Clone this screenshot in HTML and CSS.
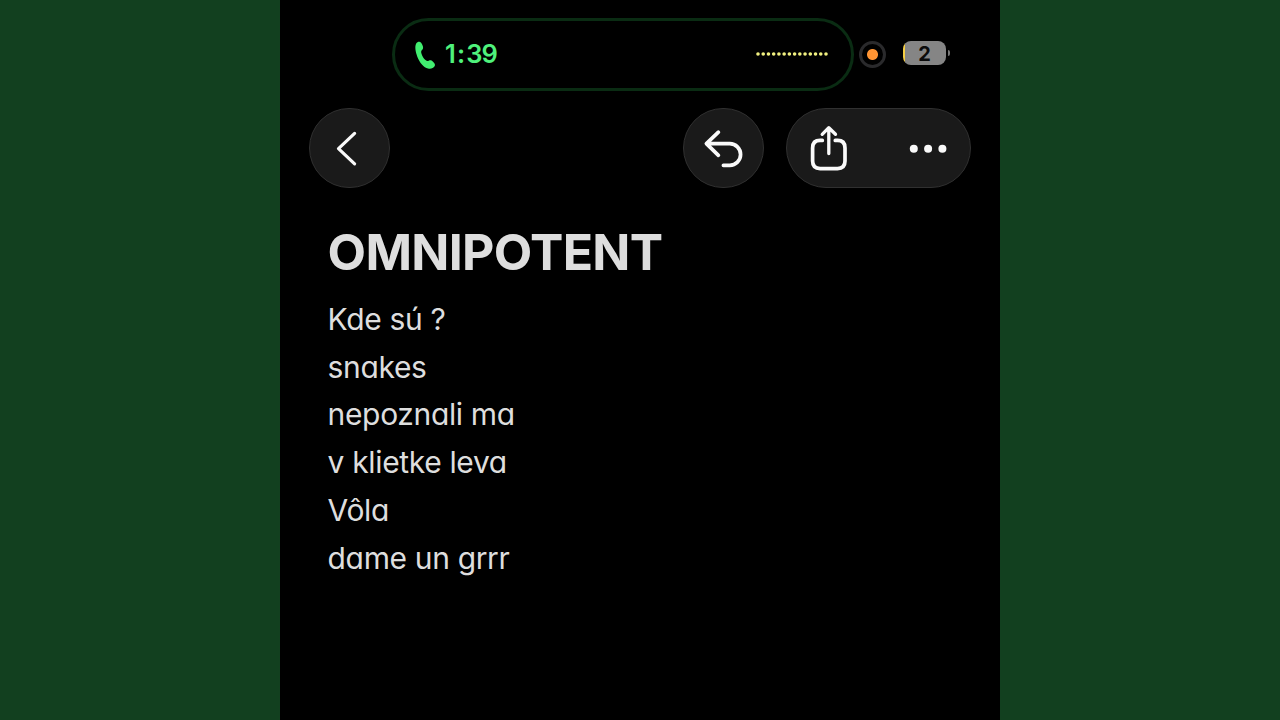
FILE: index.html
```
<!DOCTYPE html>
<html lang="sk">
<head>
  <meta charset="utf-8">
  <title>OMNIPOTENT</title>
  <link rel="stylesheet" href="styles.css">
</head>
<body>
  <div class="phone">

    <!-- Status bar -->
    <div class="status">
      <div class="island">
        <svg class="call-icon" width="22" height="30" viewBox="0 0 22 30">
          <path d="M2.2 3.6C3 2.2 4.6 1.5 6 1.9C7.4 2.3 8 4 8.7 5.7C9.4 7.6 9.2 8.9 8 10.1C6.9 11.2 7 12.2 7.6 13.9C8.3 16.2 9.9 18.8 11.5 20.1C12.8 21.2 13.6 21.2 14.7 20.7C16.2 20 17.4 20.2 19 21.7C20.8 23.4 21.5 24.8 20.6 26.3C19.4 28.3 16.8 29.1 14 28.5C9.8 27.5 5.6 22.6 3.4 16.9C1.4 11.7 .6 6.4 2.2 3.6Z"/>
        </svg>
        <span class="time">1<span class="colon">:</span>39</span>
        <svg class="wave" width="74" height="6" viewBox="0 0 74 6">
          <path d="M3 3H71.5"/>
        </svg>
      </div>
      <div class="mic"></div>
      <div class="battery"><span>2</span></div>
      <div class="battery-cap"></div>
    </div>

    <!-- Toolbar -->
    <div class="toolbar">
      <button class="btn back" aria-label="Back">
        <svg width="80" height="80" viewBox="0 0 80 80">
          <path d="M44.6 25.4L28.5 40.6L44.6 55.9"/>
        </svg>
      </button>
      <button class="btn undo" aria-label="Undo">
        <svg width="80" height="80" viewBox="0 0 80 80">
          <path d="M34.4 24.2L22.4 35.7L34.4 47.3M22.9 35.7H45.8A10.8 10.8 0 0 1 45.8 57.3H39.4"/>
        </svg>
      </button>
      <button class="btn group" aria-label="Share and more">
        <svg width="184" height="80" viewBox="0 0 184 80">
          <path d="M35.3 32.4H33.1Q25.6 32.4 25.6 39.9V53.1Q25.6 60.6 33.1 60.6H50.5Q58 60.6 58 53.1V39.9Q58 32.4 50.5 32.4H48.3"/>
          <path class="thin" d="M41.8 45.5V20M35.2 26.3L41.8 19.7L48.5 26.3"/>
          <circle cx="126.8" cy="40.8" r="4"/>
          <circle cx="141.1" cy="40.8" r="4"/>
          <circle cx="155.4" cy="40.8" r="4"/>
        </svg>
      </button>
    </div>

    <!-- Note -->
    <div class="note">
      <h1>OMNIPOTENT</h1>
      <p>Kde sú ?</p>
      <p>snakes</p>
      <p>nepoznali ma</p>
      <p>v klietke leva</p>
      <p>Vôla</p>
      <p>dame un grrr</p>
    </div>

  </div>
</body>
</html>
```

FILE: styles.css
```
* {
  box-sizing: border-box;
}
body {
  margin: 0;
  height: 720px;
  overflow: hidden;
  background: #12401f;
  font-family: Inter, "Liberation Sans", sans-serif;
}
.phone {
  width: 720px;
  height: 720px;
  margin: 0 auto;
  background: #000;
}
.status {
  display: flex;
  align-items: center;
  height: 108px;
  padding-left: 112px;
}
.island {
  display: flex;
  align-items: center;
  width: 462px;
  height: 73px;
  padding: 0 22px 0 19px;
  border: 3px solid #0a2c13;
  border-radius: 37px;
}
.call-icon {
  margin-top: 1px;
  fill: #41ee70;
}
.time {
  margin-left: 9px;
  margin-top: -2px;
  color: #4ff27c;
  font-size: 25.5px;
  font-weight: 600;
  letter-spacing: -0.9px;
}
.colon {
  margin: 0 2px;
}
.wave {
  margin-left: auto;
  margin-top: -1px;
}
.wave path {
  stroke: #f1f080;
  stroke-width: 3.6;
  stroke-linecap: round;
  stroke-dasharray: 0 5.23;
}
.mic {
  width: 27px;
  height: 27px;
  margin-left: 4.5px;
  border: 3px solid #2a2a2c;
  border-radius: 50%;
  background: radial-gradient(circle, #ff9433 5px, #000 6px);
}
.battery {
  width: 43px;
  height: 24px;
  margin-left: 17.5px;
  margin-top: -2px;
  border-radius: 8px;
  background: linear-gradient(90deg, #f5cf45 2px, #858585 2px);
  color: #0b0b0b;
  font-size: 20px;
  font-weight: 700;
  line-height: 26px;
  text-align: center;
}
.battery-cap {
  width: 2px;
  height: 6px;
  margin-left: 2px;
  margin-top: -2px;
  border-radius: 0 3px 3px 0;
  background: #777;
}
.toolbar {
  display: flex;
  padding: 0 29px;
}
.btn {
  display: flex;
  align-items: center;
  justify-content: center;
  width: 81px;
  height: 80px;
  padding: 0;
  border: 1.5px solid #303030;
  border-radius: 41px;
  background: #1a1a1a;
}
.btn svg {
  flex: none;
  fill: none;
  stroke: #fafafa;
  stroke-width: 3.7;
  stroke-linecap: round;
  stroke-linejoin: round;
}
.btn .thin {
  stroke-width: 3.3;
}
.btn circle {
  fill: #fafafa;
  stroke: none;
}
.back svg {
  stroke-width: 3.2;
}
.undo {
  margin-left: auto;
}
.group {
  width: 185px;
  margin-left: 22px;
}
.note {
  padding: 34px 47.6px;
  color: #dedede;
}
h1 {
  margin: 0 0 14px;
  font-size: 50px;
  font-weight: 700;
  line-height: 60px;
  letter-spacing: -0.7px;
}
p {
  margin: 0;
  font-size: 30px;
  line-height: 47.7px;
  letter-spacing: -0.35px;
  font-feature-settings: "cv11";
}
```
